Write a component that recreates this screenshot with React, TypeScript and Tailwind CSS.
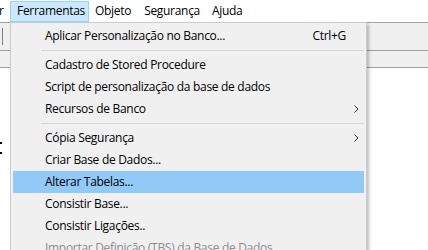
import React from 'react';

type MenuEntry =
  | { kind: 'item'; label: string; shortcut?: string; submenu?: boolean; active?: boolean; disabled?: boolean }
  | { kind: 'sep' };

const entries: MenuEntry[] = [
  { kind: 'item', label: 'Aplicar Personalização no Banco...', shortcut: 'Ctrl+G' },
  { kind: 'sep' },
  { kind: 'item', label: 'Cadastro de Stored Procedure' },
  { kind: 'item', label: 'Script de personalização da base de dados' },
  { kind: 'item', label: 'Recursos de Banco', submenu: true },
  { kind: 'sep' },
  { kind: 'item', label: 'Cópia Segurança', submenu: true },
  { kind: 'item', label: 'Criar Base de Dados...' },
  { kind: 'item', label: 'Alterar Tabelas...', active: true },
  { kind: 'item', label: 'Consistir Base...' },
  { kind: 'item', label: 'Consistir Ligações..' },
  { kind: 'item', label: 'Importar Definição (TBS) da Base de Dados', disabled: true },
];

const Chevron = () => (
  <svg width="5" height="8" viewBox="0 0 5 8" className="text-[#333]">
    <path d="M0.5 0.5 L4 4 L0.5 7.5" fill="none" stroke="currentColor" strokeWidth="1" />
  </svg>
);

const App = () => {
  const font = { fontFamily: '"Open Sans", "Noto Sans", sans-serif' };

  return (
    <div
      className="relative h-[250px] w-[428px] overflow-hidden bg-white text-[12px] tracking-[-0.3px] text-black"
      style={font}
    >
      {/* Menu bar */}
      <div className="flex h-[22px] items-center bg-white">
        <span className="-ml-[1px] w-[11px]">r</span>
        <div className="flex h-[21px] items-center border border-[#99d1ff] bg-[#cce8ff] pl-[6px] pr-[3px]">
          Ferramentas
        </div>
        <div className="pl-[6px] pr-[7px]">Objeto</div>
        <div className="px-[6px]">Segurança</div>
        <div className="px-[6px]">Ajuda</div>
      </div>

      {/* Toolbars behind the menu */}
      <div className="border-t border-[#a0a0a0] bg-[#f0f0f0]">
        <div className="flex h-[28px] items-center border-b border-[#a0a0a0]">
          <div className="ml-[2px] h-[17px] w-[1px] bg-[#808080]" />
        </div>
        <div className="h-[17px] border-b border-[#a0a0a0]" />
      </div>

      {/* Side marks on the white area */}
      <div className="mt-[74px] flex flex-col gap-[8px]">
        <div className="h-[2px] w-[2px] bg-black" />
        <div className="h-[2px] w-[2px] bg-black" />
      </div>

      {/* Dropdown */}
      <div className="absolute left-[10px] top-[22px] w-[357px] border border-[#cccccc] bg-[#f0f0f0] p-[2px] shadow-[2px_2px_3px_rgba(0,0,0,0.25)]">
        {entries.map((e, i) =>
          e.kind === 'sep' ? (
            <div key={i} className="flex h-[7px] items-center">
              <div className="ml-[28px] h-[1px] flex-1 bg-[#d7d7d7]" />
            </div>
          ) : (
            <div
              key={i}
              className={`flex h-[22px] items-center pl-[32px] pr-[5px] ${e.active ? 'bg-[#91c9f7]' : ''} ${
                e.disabled ? 'text-[#8d8d8d]' : 'text-black'
              }`}
            >
              <span className="flex-1 whitespace-nowrap">{e.label}</span>
              {e.shortcut && <span className="mr-[13px]">{e.shortcut}</span>}
              {e.submenu && <Chevron />}
            </div>
          )
        )}
      </div>
    </div>
  );
};

export default App;
